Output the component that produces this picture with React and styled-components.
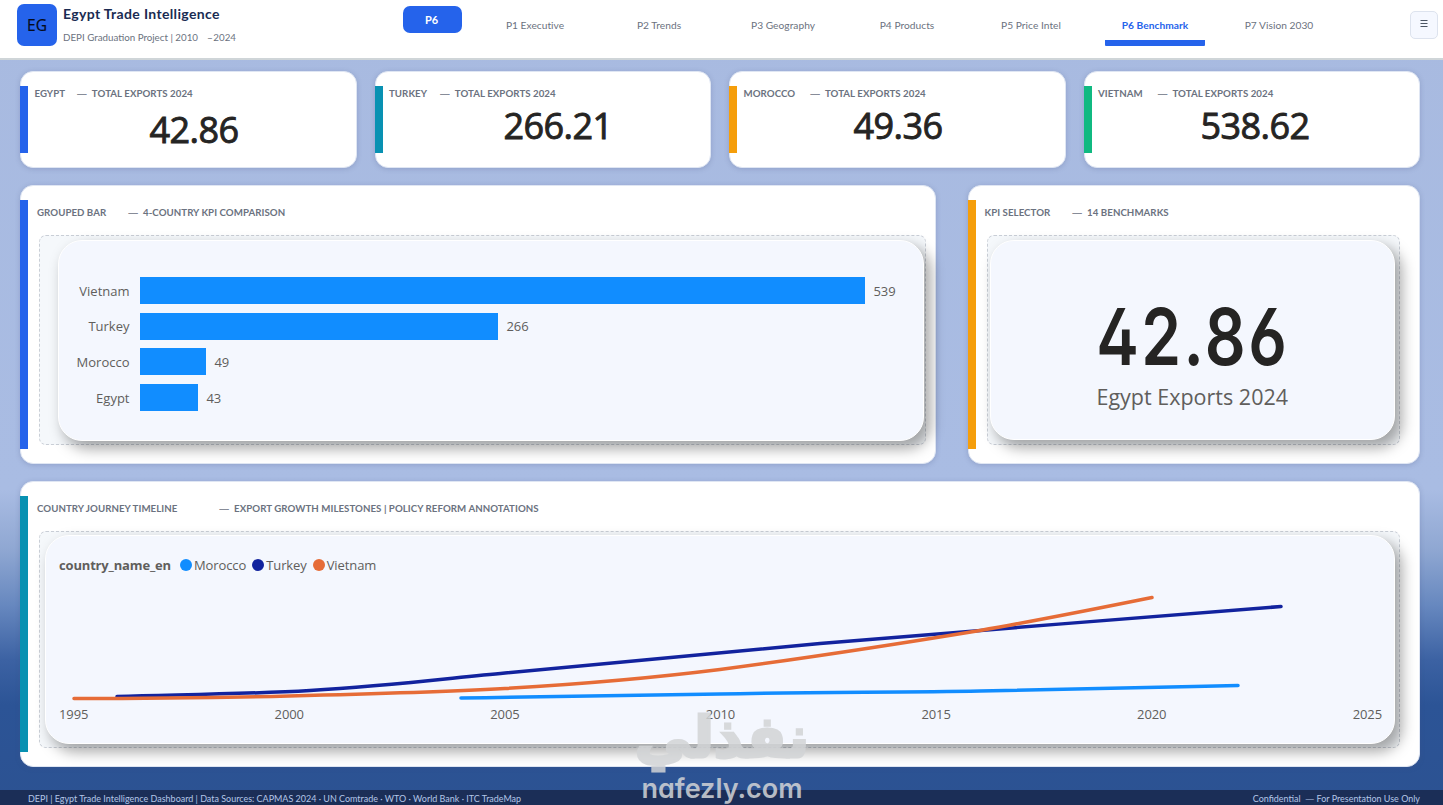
import React from "react";
import styled, { createGlobalStyle } from "styled-components";

const tabs = [
  { name: "P1 Executive" },
  { name: "P2 Trends" },
  { name: "P3 Geography" },
  { name: "P4 Products" },
  { name: "P5 Price Intel" },
  { name: "P6 Benchmark", active: true },
  { name: "P7 Vision 2030" },
];

const kpis = [
  { country: "EGYPT", value: "42.86", color: "#2563eb", gap: 12, drop: 5, shift: -2 },
  { country: "TURKEY", value: "266.21", color: "#0891b2", gap: 13, drop: 1, shift: 17 },
  { country: "MOROCCO", value: "49.36", color: "#f59e0b", gap: 15, drop: 1, shift: -12 },
  { country: "VIETNAM", value: "538.62", color: "#10b981", gap: 15, drop: 1, shift: -7 },
];

const bars = [
  { name: "Vietnam", value: 539, width: 725 },
  { name: "Turkey", value: 266, width: 358 },
  { name: "Morocco", value: 49, width: 66 },
  { name: "Egypt", value: 43, width: 58 },
];

const legend = [
  { name: "Morocco", color: "#118dff" },
  { name: "Turkey", color: "#12239e" },
  { name: "Vietnam", color: "#e66c37" },
];

const years = [1995, 2000, 2005, 2010, 2015, 2020, 2025];

function Header() {
  return (
    <TopBar>
      <Logo>EG</Logo>
      <Brand>
        <h1>Egypt Trade Intelligence</h1>
        <p>
          DEPI Graduation Project | 2010 <span>–</span>2024
        </p>
      </Brand>
      <PageBadge>P6</PageBadge>
      <Tabs>
        {tabs.map((tab) => (
          <Tab key={tab.name} $active={tab.active}>
            {tab.name}
          </Tab>
        ))}
      </Tabs>
      <MenuButton>
        <svg width="8" height="8" viewBox="0 0 8 8" stroke="#4b5563" strokeWidth="1">
          <path d="M0.5 0.5H7.5M0.5 3.5H7.5M0.5 6.5H7.5" />
        </svg>
      </MenuButton>
    </TopBar>
  );
}

function Heading({ first, gap, rest }) {
  return (
    <CardTitle $gap={gap}>
      <span>{first}</span>
      <i>—</i>
      <span>{rest}</span>
    </CardTitle>
  );
}

function BarChart() {
  return (
    <BarList>
      {bars.map((bar) => (
        <BarRow key={bar.name}>
          <BarLabel>{bar.name}</BarLabel>
          <Bar style={{ width: bar.width }} />
          <BarValue>{bar.value}</BarValue>
        </BarRow>
      ))}
    </BarList>
  );
}

function Timeline() {
  return (
    <>
      <Legend>
        <b>country_name_en</b>
        {legend.map((item) => (
          <LegendItem key={item.name} $color={item.color}>
            {item.name}
          </LegendItem>
        ))}
      </Legend>
      <Lines width="1348" height="127" viewBox="46 580 1348 127" fill="none" strokeWidth="3.5" strokeLinecap="round">
        <path stroke="#118dff" d="M461 698C550 697 640 695 720 694C800 692 900 692.5 980 691C1060 689 1150 687.500 1238 685.500" />
        <path stroke="#12239e" d="M117 696.500C190 694.500 250 694 310 690.500C390 686 450 678 505 673C600 664 720 653 820 643.500C970 631 1130 618.500 1281 606.500" />
        <path stroke="#e66c37" d="M74 698.500C150 698.500 210 698 289 696C370 694 440 692 505 688.500C600 683 660 677 720 669.500C830 655 910 642 980 630.500C1040 620 1095 609 1152 597.500" />
      </Lines>
      <Years>
        {years.map((year) => (
          <span key={year}>{year}</span>
        ))}
      </Years>
    </>
  );
}

export default function App() {
  return (
    <>
      <GlobalStyle />
      <Page>
        <Header />
        <Main>
          <KpiGrid>
            {kpis.map((kpi) => (
              <Card key={kpi.country}>
                <Accent $color={kpi.color} />
                <KpiBody>
                  <Heading first={kpi.country} gap={kpi.gap} rest="TOTAL EXPORTS 2024" />
                  <KpiValue $drop={kpi.drop} $shift={kpi.shift}>
                    {kpi.value}
                  </KpiValue>
                </KpiBody>
              </Card>
            ))}
          </KpiGrid>
          <MiddleRow>
            <Card>
              <Accent $color="#2563eb" />
              <CardBody $right={9}>
                <Heading first="GROUPED BAR" gap={22} rest="4-COUNTRY KPI COMPARISON" />
                <Placeholder $pad="4px 1px 3px 18px">
                  <Panel>
                    <BarChart />
                  </Panel>
                </Placeholder>
              </CardBody>
            </Card>
            <Card>
              <Accent $color="#f59e0b" />
              <CardBody $right={19}>
                <Heading first="KPI SELECTOR" gap={22} rest="14 BENCHMARKS" />
                <Placeholder $pad="4px 4px 4px 2px">
                  <Panel>
                    <BigValue>42.86</BigValue>
                    <BigLabel>Egypt Exports 2024</BigLabel>
                  </Panel>
                </Placeholder>
              </CardBody>
            </Card>
          </MiddleRow>
          <TimelineCard>
            <Accent $color="#0891b2" />
            <CardBody $right={19}>
              <Heading first="COUNTRY JOURNEY TIMELINE" gap={42} rest="EXPORT GROWTH MILESTONES | POLICY REFORM ANNOTATIONS" />
              <Placeholder $pad="3px 4px 3px 5px">
                <Panel>
                  <Timeline />
                </Panel>
              </Placeholder>
            </CardBody>
          </TimelineCard>
        </Main>
        <Footer>
          <span>DEPI | Egypt Trade Intelligence Dashboard | Data Sources: CAPMAS 2024 · UN Comtrade · WTO · World Bank · ITC TradeMap</span>
          <span>
            Confidential &nbsp;<i>—</i> For Presentation Use Only
          </span>
        </Footer>
        <Watermark>
          <strong lang="ar">نفذلي</strong>
          <span>nafezly.com</span>
        </Watermark>
      </Page>
    </>
  );
}

const GlobalStyle = createGlobalStyle`
  * {
    box-sizing: border-box;
  }
  body {
    margin: 0;
    font-family: Lato, "Liberation Sans", sans-serif;
  }
  h1, h2, p {
    margin: 0;
  }
`;

const Page = styled.div`
  position: relative;
  width: 1443px;
  height: 805px;
  display: flex;
  flex-direction: column;
  overflow: hidden;
  background: linear-gradient(
    180deg,
    #a8bae0 0,
    #a9bce3 490px,
    #8fa7d2 550px,
    #6788bf 605px,
    #3c62a3 660px,
    #2c5496 705px,
    #2c5292 805px
  );
`;

const TopBar = styled.header`
  height: 60px;
  flex: none;
  display: flex;
  align-items: flex-start;
  background: #fff;
  border-bottom: 2px solid #cfd5d8;
  padding-left: 17px;
`;

const Logo = styled.div`
  width: 40px;
  height: 42px;
  margin-top: 4px;
  border-radius: 7px;
  background: #2563eb;
  color: #050b1c;
  font: 15.5px/43px "Open Sans", sans-serif;
  -webkit-text-stroke: 0.2px #050b1c;
  text-align: center;
`;

const Brand = styled.div`
  width: 340px;
  padding: 4px 0 0 6px;
  white-space: nowrap;
  h1 {
    font-size: 14px;
    line-height: 19px;
    font-weight: 700;
    letter-spacing: 0.35px;
    color: #1a2b52;
  }
  p {
    margin-top: 7px;
    font-size: 9.75px;
    line-height: 15px;
    color: #6b7280;
  }
  span {
    margin: 0 1px 0 7px;
    font-family: "Open Sans", sans-serif;
  }
`;

const PageBadge = styled.div`
  width: 59px;
  height: 27px;
  margin: 6px 0 0 6px;
  padding-right: 2px;
  border-radius: 7px;
  background: #2563eb;
  color: #fff;
  font-size: 11px;
  font-weight: 700;
  line-height: 28px;
  text-align: center;
`;

const Tabs = styled.nav`
  display: flex;
  gap: 24px;
  margin-left: 23px;
`;

const Tab = styled.a`
  width: 100px;
  height: 46px;
  padding-top: 18px;
  border-bottom: 6px solid ${(props) => (props.$active ? "#2563eb" : "transparent")};
  border-radius: 1px;
  color: ${(props) => (props.$active ? "#2563eb" : "#6b7280")};
  font-size: 10.2px;
  font-weight: ${(props) => (props.$active ? 700 : 400)};
  letter-spacing: 0.03px;
  line-height: 15px;
  text-align: center;
  white-space: nowrap;
`;

const MenuButton = styled.div`
  width: 28px;
  height: 28px;
  margin: 11px 5px 0 auto;
  padding-bottom: 2px;
  display: flex;
  align-items: center;
  justify-content: center;
  border: 1px solid #dde3ee;
  border-radius: 5px;
  background: #f5f8ff;
`;

const Main = styled.main`
  flex: none;
  height: 730px;
  padding: 11px 23px 0 20px;
  display: flex;
  flex-direction: column;
`;

const KpiGrid = styled.section`
  flex: none;
  display: grid;
  grid-template-columns: repeat(4, 1fr);
  grid-template-rows: 97px;
  gap: 18px;
`;

const Card = styled.section`
  display: flex;
  padding: 14px 0;
  background: #fff;
  border: 1px solid #dfe6f3;
  border-radius: 13px;
  box-shadow: 0 1px 5px rgba(70, 85, 130, 0.25);
`;

const MiddleRow = styled.div`
  flex: none;
  display: grid;
  grid-template-columns: 916px 452.5px;
  justify-content: space-between;
  height: 279px;
  margin-top: 17px;
`;

const TimelineCard = styled(Card)`
  flex: none;
  height: 286px;
  margin-top: 17px;
`;

const Accent = styled.div`
  flex: none;
  width: 8px;
  margin-left: -1px;
  background: ${(props) => props.$color};
`;

const KpiBody = styled.div`
  flex: 1;
  padding-left: 6.5px;
`;

const CardBody = styled.div`
  flex: 1;
  display: flex;
  flex-direction: column;
  padding: 5px ${(props) => props.$right}px 4px 9px;
`;

const CardTitle = styled.h2`
  display: flex;
  height: 15px;
  color: #6b7280;
  font-size: 9.7px;
  font-weight: 700;
  letter-spacing: 0.05px;
  line-height: 15px;
  white-space: nowrap;
  i {
    margin: 0 5px 0 ${(props) => props.$gap}px;
    font-family: "Open Sans", sans-serif;
    font-style: normal;
    font-weight: 400;
    -webkit-text-stroke: 0.4px #6b7280;
  }
`;

const KpiValue = styled.div`
  margin: ${(props) => props.$drop}px 0 0;
  padding-left: ${(props) => Math.max(props.$shift, 0)}px;
  padding-right: ${(props) => Math.max(-props.$shift, 0)}px;
  color: #252423;
  font: 400 36px/48px "Open Sans", sans-serif;
  -webkit-text-stroke: 0.9px #252423;
  letter-spacing: -0.6px;
  text-align: center;
`;

/* dashed slot that frames each visual */
const Placeholder = styled.div`
  flex: 1;
  display: flex;
  margin: 15px 0 0 2px;
  padding: ${(props) => props.$pad};
  border: 1px dashed #c9ced6;
  border-radius: 7px;
  background: #f5f8fb;
`;

const Panel = styled.div`
  flex: 1;
  min-width: 0;
  display: flex;
  flex-direction: column;
  border: 1px solid #fff;
  border-radius: 24px;
  background: #f4f7fe;
  box-shadow: 6px 7px 14px 1px rgba(0, 0, 0, 0.34);
  font-family: "Open Sans", sans-serif;
`;

const BarList = styled.div`
  display: flex;
  flex-direction: column;
  gap: 8px;
  padding-top: 36px;
`;

const BarRow = styled.div`
  display: flex;
  align-items: center;
  height: 27.6px;
  color: #605e5c;
  font-size: 13px;
`;

const BarLabel = styled.div`
  width: 70.5px;
  text-align: right;
`;

const Bar = styled.div`
  height: 27px;
  margin: 0 9px 0 10px;
  background: #118dff;
`;

const BarValue = styled.div`
  letter-spacing: -0.1px;
`;

const BigValue = styled.div`
  height: 80px;
  margin-top: 55px;
  color: #252423;
  font: 600 79px/80px Inter, sans-serif;
  font-feature-settings: "cv02", "cv03", "cv04";
  letter-spacing: 3px;
  text-align: center;
  transform: scaleX(0.81);
`;

const BigLabel = styled.div`
  margin-top: 6px;
  color: #605e5c;
  font-size: 21.5px;
  line-height: 30px;
  text-align: center;
`;

const Legend = styled.div`
  display: flex;
  align-items: center;
  height: 20px;
  margin: 19px 0 0 13px;
  color: #605e5c;
  font-size: 13px;
  b {
    margin-right: 9px;
    letter-spacing: -0.17px;
  }
`;

const LegendItem = styled.span`
  display: flex;
  align-items: center;
  margin-right: 6px;
  letter-spacing: -0.1px;
  &::before {
    content: "";
    width: 12px;
    height: 12px;
    margin-right: 2px;
    border-radius: 50%;
    background: ${(props) => props.$color};
  }
`;

const Lines = styled.svg`
  flex: none;
  margin: 5px 0 -1px;
`;

const Years = styled.div`
  display: flex;
  justify-content: space-between;
  padding: 0 12px 0 13px;
  color: #605e5c;
  font-size: 13px;
  line-height: 16px;
  letter-spacing: -0.1px;
`;

const Footer = styled.footer`
  flex: none;
  height: 15px;
  display: flex;
  justify-content: space-between;
  padding: 2px 23px 0 28px;
  background: #1b2e57;
  color: #b4c6e8;
  font-size: 8.97px;
  line-height: 14px;
  white-space: nowrap;
  i {
    font-family: "Open Sans", sans-serif;
    font-style: normal;
  }
`;

const Watermark = styled.div`
  position: absolute;
  left: 622px;
  top: 703px;
  width: 200px;
  display: flex;
  flex-direction: column;
  align-items: center;
  color: #d2d4d6;
  opacity: 0.85;
  strong {
    height: 69px;
    font: 700 57px/69px "DejaVu Sans", sans-serif;
    -webkit-text-stroke: 3px #d2d4d6;
  }
  span {
    font: 600 27px/34px Inter, sans-serif;
    font-feature-settings: "cv11";
  }
`;
